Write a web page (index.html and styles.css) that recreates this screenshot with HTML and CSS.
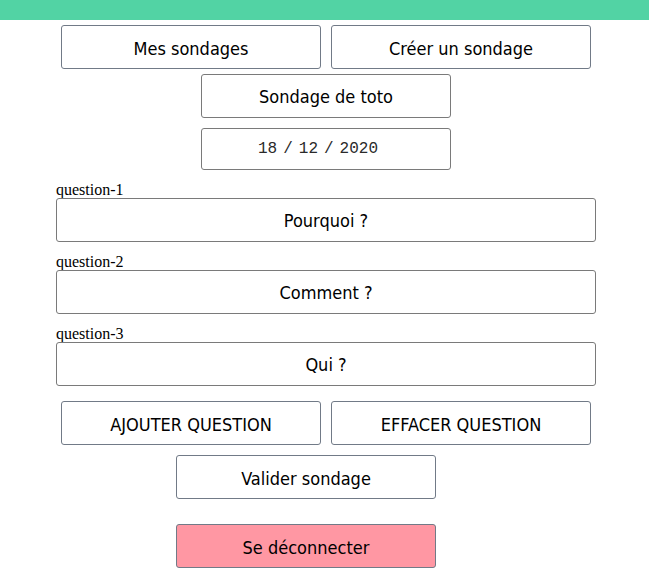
FILE: index.html
```html
<!DOCTYPE html>
<html lang="fr">
<head>
<meta charset="utf-8">
<title>Sondage</title>
<link rel="stylesheet" href="styles.css">
</head>
<body>
<header class="topbar"></header>
<main class="page">
  <nav class="row">
    <button class="btn">Mes sondages</button>
    <button class="btn">Créer un sondage</button>
  </nav>
  <div class="title-row">
    <input class="field title" type="text" value="Sondage de toto">
  </div>
  <div class="title-row">
    <div class="field date"><span>18</span><span class="sep">/</span><span>12</span><span class="sep">/</span><span>2020</span></div>
  </div>
  <div class="question">
    <label class="qlabel" for="q1">question-1</label>
    <input id="q1" class="field qinput" type="text" value="Pourquoi ?">
  </div>
  <div class="question">
    <label class="qlabel" for="q2">question-2</label>
    <input id="q2" class="field qinput" type="text" value="Comment ?">
  </div>
  <div class="question">
    <label class="qlabel" for="q3">question-3</label>
    <input id="q3" class="field qinput" type="text" value="Qui ?">
  </div>
  <div class="row actions">
    <button class="btn">AJOUTER QUESTION</button>
    <button class="btn">EFFACER QUESTION</button>
  </div>
  <div class="single">
    <button class="btn">Valider sondage</button>
  </div>
  <div class="single logout-row">
    <button class="btn logout">Se déconnecter</button>
  </div>
</main>
</body>
</html>
```
FILE: styles.css
```css
* { box-sizing: border-box; }
html, body { margin: 0; padding: 0; background: #fff; }
body {
  font-family: "DejaVu Sans Condensed", "DejaVu Sans", sans-serif;
  color: #000;
}
.topbar {
  height: 20px;
  background: #52d3a4;
}
.page {
  width: 540px;
  margin-left: 56px;
  display: flex;
  flex-direction: column;
}
.row {
  display: flex;
  justify-content: center;
  margin-top: 5px;
}
.btn {
  width: 260px;
  height: 44px;
  margin: 0 5px;
  background: #fff;
  border: 1px solid #717a87;
  border-radius: 3px;
  font-family: inherit;
  font-size: 18px;
  color: #000;
  padding: 3px 0 0 0;
  line-height: 38px;
}
.title-row {
  display: flex;
  justify-content: center;
  margin-top: 5px;
}
.title-row + .title-row { margin-top: 10px; }
.field {
  background: #fff;
  border: 1px solid #7a7a7a;
  border-radius: 3px;
  font-family: inherit;
  font-size: 18px;
  color: #000;
  text-align: center;
  padding: 0;
  outline: none;
}
.title {
  width: 250px;
  height: 44px;
}
.date {
  width: 250px;
  height: 42px;
  display: flex;
  align-items: center;
  justify-content: center;
  padding-right: 16px;
  font-family: "Liberation Mono", monospace;
  font-size: 16px;
  color: #2a2a2a;
}
.date .sep { margin: 0 6px; }
.question {
  display: flex;
  flex-direction: column;
  margin-top: 10px;
}
.qlabel {
  font-family: "Liberation Serif", serif;
  font-size: 16px;
  line-height: 18px;
  height: 18px;
  padding-top: 1px;
}
.qinput {
  width: 540px;
  height: 44px;
}
.actions { margin-top: 15px; }
.single {
  display: flex;
  margin-top: 10px;
  padding-left: 115px;
}
.logout-row { margin-top: 25px; }
.logout { background: #ff97a3; }
```
